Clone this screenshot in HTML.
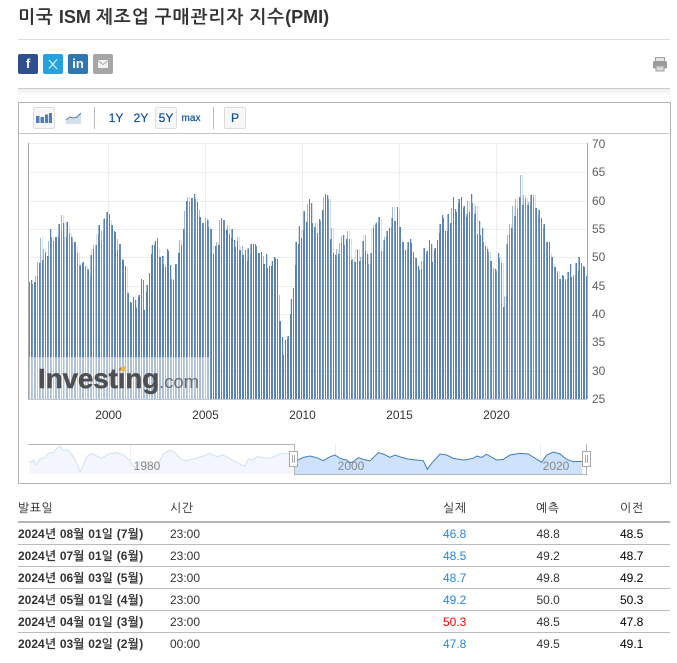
<!DOCTYPE html>
<html lang="ko"><head><meta charset="utf-8"><title>미국 ISM 제조업 구매관리자 지수(PMI)</title>
<style>
html,body{margin:0;padding:0;background:#fff}
body{width:677px;height:663px;overflow:hidden;position:relative;font-family:"Liberation Sans","NanumGothic","Noto Sans CJK KR",sans-serif;font-size:12px;color:#333}
.a{position:absolute;white-space:nowrap}
.h{left:18px;width:652px;height:1px;background:#bbb}
.r{line-height:22px;height:22px}
.btn{position:absolute;top:107px;height:20px;background:#f7f7f7;border:1px solid #ddd;border-radius:2px}
.t{position:absolute;top:107px;line-height:22px;color:#0f4f96;font-size:12px;text-align:center;-webkit-text-stroke:.2px #0f4f96}
.s{position:absolute;top:54px;width:20px;height:20px;border-radius:2px;color:#fff;text-align:center;line-height:20px;font-weight:bold;font-size:13px}
.sep{position:absolute;top:107px;width:1px;height:22px;background:#bbb}
svg text{font-family:"Liberation Sans",sans-serif;font-size:12px}
i{font-style:normal;letter-spacing:.5px}
.ti i{letter-spacing:1px}
</style></head><body>
<div class="a ti" style="left:18px;top:5px;font-size:18px;font-weight:bold;line-height:24px;color:#333"><i>미국</i> ISM <i>제조업</i> <i>구매관리자</i> <i>지수</i>(PMI)</div>
<div class="a" style="left:18px;top:39px;width:652px;height:1px;background:#ddd"></div>
<div class="s" style="left:18px;background:#2f4f8f">f</div>
<div class="s" style="left:43px;background:#24a3e0"><svg width="20" height="20" style="display:block"><path d="M6 6l8 9M14 5.500l-8 9" stroke="#dff2fb" stroke-width="1.200" fill="none"/></svg></div>
<div class="s" style="left:68px;background:#2f77b0">in</div>
<div class="s" style="left:93px;background:#a6a6a6"><svg width="20" height="20" style="display:block"><rect x="5" y="6" width="10" height="8" rx="1" fill="#f2f2f2"/><path d="M5.500 7l4.500 3.500L14.500 7" stroke="#a6a6a6" fill="none"/></svg></div>
<svg class="a" style="left:652px;top:56px" width="16" height="16"><rect x="3.500" y="1.500" width="9" height="4" fill="#e4e4e4" stroke="#a0a0a0"/><rect x="1" y="5" width="14" height="7.500" rx="1.500" fill="#9a9a9a"/><rect x="4" y="10" width="8" height="5" fill="#d8d8d8" stroke="#a0a0a0"/></svg>
<div class="a" style="left:18px;top:88px;width:652px;height:1px;background:#ccc"></div>
<div class="a" style="left:18px;top:89px;width:652px;height:7px;background:linear-gradient(#eee,#fff)"></div>

<div class="a" style="left:18px;top:102px;width:651px;height:380px;border:1px solid #b3b3b3"></div>
<div class="a" style="left:19px;top:133px;width:650px;height:1px;background:#c4c4c4"></div>
<div class="btn" style="left:33px;width:20px"><svg width="20" height="20" style="display:block"><path d="M2 8h3.500v7H2zM6.500 9h3.500v6H6.500zM11 6.500h3.200V15H11zM15 5h3v10h-3z" fill="#4f7fb8"/></svg></div>
<svg class="a" style="left:65px;top:110px" width="17" height="16"><path d="M1 10L5 7l3 1 4-1 4-4v11H1z" fill="#d5e0ee"/><path d="M1 10L5 7l3 1 4-1 4-4" stroke="#4f7fb8" fill="none"/></svg>
<div class="sep" style="left:94px"></div>
<div class="t" style="left:105px;width:22px">1Y</div>
<div class="t" style="left:130px;width:22px">2Y</div>
<div class="btn" style="left:155px;width:20px"></div>
<div class="t" style="left:155px;width:22px">5Y</div>
<div class="t" style="left:180px;top:108px;width:22px;font-size:10px">max</div>
<div class="sep" style="left:213px"></div>
<div class="btn" style="left:224px;width:20px"></div>
<div class="t" style="left:224px;width:22px">P</div>

<svg class="a" style="left:0;top:0" width="677" height="490">
<defs>
<pattern id="stripe" x="29" y="0" width="8" height="20" patternUnits="userSpaceOnUse"><path d="M0 0h1v20H0zM2 0h1v20H2zM3 0h1v20H3zM5 0h1v20H5zM6 0h1v20H6z" fill="#fff"/></pattern>
<mask id="bm" maskUnits="userSpaceOnUse" x="0" y="0" width="677" height="490"><rect x="28" y="140" width="560" height="260" fill="url(#stripe)"/></mask>
</defs>
<path d="M28 143.500H587M28 172.500H587M28 201.500H587M28 229.500H587M28 257.500H587M28 286.500H587M28 314.500H587M28 342.500H587M28 371.500H587M108.500 143V399M205.500 143V399M302.500 143V399M399.500 143V399M496.500 143V399" stroke="#eee" fill="none"/>
<g mask="url(#bm)">
<g transform="translate(20,140) scale(.33333)" stroke="#5983b2" stroke-width="5.500" fill="none">
<path d="M27 425V777M34 420V777M40 432V777M44 426V777M49 408V777M55 366V777M58 369V777M64 294V777M67 360V777M73 327V777M77 337V777M82 348V777M88 303V777M91 267V777M97 291V777M103 303V777M108 291V777M113 291V777M118 252V777M121 273V777M127 225V777M130 249V777M137 291V777M142 246V777M145 258V777M151 279V777M155 291V777M161 306V777M165 306V777M169 318V777M175 339V777M181 376V777M185 370V777M190 366V777M193 378V777M199 378V777M205 388V777M208 408V777M214 345V777M218 327V777M223 315V777M230 315V777M233 282V777M238 255V777M241 300V777M247 273V777M253 237V777M256 234V777M262 216V777M268 222V777M271 240V777M277 255V777M282 273V777M286 276V777M290 297V777M295 330V777M300 312V777M306 358V777M310 360V777M316 378V777M319 381V777M325 459V777M331 486V777M335 489V777M340 471V777M346 480V777M349 503V777M355 471V777M358 465V777M364 417V777M369 420V777M373 510V777M379 456V777M382 435V777M388 399V777M394 342V777M398 315V777M403 315V777M407 303V777M411 294V777M415 327V777M419 351V777M424 351V777M428 348V777M433 372V777M436 381V777M442 327V777M447 333V777M451 375V777M457 417V777M460 420V777M466 372V777M472 372V777M476 339V777M481 300V777M484 315V777M490 267V777M496 213V777M499 183V777M505 171V777M511 186V777M514 174V777M520 174V777M523 162V777M529 177V777M532 186V777M536 210V777M541 231V777M547 249V777M553 249V777M559 234V777M563 240V777M568 261V777M574 267V777M577 318V777M581 342V777M586 318V777M592 306V777M597 315V777M601 240V777M606 234V777M612 240V777M616 267V777M621 270V777M625 255V777M630 282V777M634 294V777M637 267V777M643 300V777M647 321V777M651 303V777M655 291V777M660 330V777M665 318V777M670 345V777M675 330V777M680 363V777M685 325V777M688 342V777M694 312V777M700 312V777M705 312V777M708 318V777M713 339V777M718 339V777M724 336V777M728 348V777M733 372V777M739 342V777M743 384V777M748 378V777M753 378V777M758 363V777M763 351V777M768 354V777M773 357V777M776 465V777M781 543V777M787 591V777M791 645V777M796 600V777M801 597V777M805 588V777M811 522V777M815 477V777M820 444V777M826 375V777M829 306V777M835 312V777"/>
</g>
<g transform="translate(300,140) scale(.33333)" stroke="#5983b2" stroke-width="5.500" fill="none">
<path d="M-1 258V777M3 294V777M8 270V777M13 213V777M19 246V777M25 192V777M28 177V777M34 189V777M37 249V777M43 261V777M49 249V777M52 279V777M58 237V777M64 243V777M67 210V777M73 171V777M76 162V777M82 165V777M88 177V777M91 297V777M97 264V777M100 339V777M106 345V777M112 327V777M115 342V777M121 309V777M127 288V777M130 285V777M136 315V777M139 297V777M145 273V777M151 297V777M154 360V777M160 357V777M166 366V777M170 330V777M175 327V777M178 363V777M184 351V777M190 303V777M194 285V777M199 333V777M202 342V777M208 372V777M214 339V777M218 264V777M223 255V777M229 250V777M232 246V777M238 231V777M241 237V777M247 333V777M253 300V777M256 291V777M262 273V777M268 264V777M271 264V777M277 234V777M280 201V777M286 243V777M292 201V777M295 207V777M301 261V777M304 297V777M310 306V777M316 330V777M319 330V777M325 306V777M331 297V777M334 309V777M340 336V777M343 351V777M349 354V777M355 378V777M358 390V777M364 387V777M367 363V777M373 324V777M379 342V777M382 333V777M388 300V777M394 312V777M397 366V777M403 330V777M406 324V777M412 300V777M418 279V777M421 252V777M427 225V777M430 234V777M436 273V777M442 273V777M445 222V777M451 249V777M457 204V777M460 171V777M466 207V777M469 216V777M475 189V777M478 177V777M484 171V777M490 204V777M493 198V777M499 231V777M502 222V777M505 183V777M508 216V777M514 162V777M520 189V777M526 222V777M529 198V777M532 282V777M538 243V777M541 285V777M547 264V777M553 306V777M559 318V777M562 327V777M568 336V777M574 363V777M577 393V777M583 384V777M586 387V777M592 393V777M595 339V777M601 354V777M607 369V777M610 501V777M616 471V777M622 312V777M625 285V777M631 252V777M634 264V777M640 198V777M646 228V777M649 177V777M655 207V777M658 171V777M664 105V777M667 195V777M673 165V777M679 174V777M685 195V777M688 186V777M694 165V777M697 171V777M703 165V777M709 204V777M712 225V777M718 210V777M724 234V777M727 264V777M733 252V777M736 303V777M742 306V777M748 306V777M751 339V777M757 351V777M760 372V777M766 381V777M772 399V777M775 393V777M781 417V777M787 405V777M790 408V777M796 423V777M799 417V777M805 396V777M811 372V777M814 411V777M820 411V777M823 405V777M829 369V777M835 393V777M838 351V777M844 369V777M850 378V777M853 381V777M859 408V777"/>
</g>
</g>
<rect x="28" y="357" width="182" height="42" fill="#fff" fill-opacity=".5"/>
<text x="38" y="388" style="font-size:28px;font-weight:bold;letter-spacing:-.2px" fill="#4d4f53" stroke="#4d4f53" stroke-width=".4">Investing</text>
<text x="159" y="388" style="font-size:18.500px" fill="#6a6c70">.com</text>
<path d="M120 371l1-4 5-1-1 5z" fill="#f5b240"/>
<path d="M28.500 143V399M587.500 143V399" stroke="#a8a8a8" fill="none"/>
<path d="M28 399.500H587" stroke="#bcc8d8" fill="none"/>
<g fill="#606060" text-anchor="start">
<text x="592" y="148">70</text><text x="592" y="176">65</text><text x="592" y="205">60</text><text x="592" y="233">55</text><text x="592" y="261">50</text><text x="592" y="290">45</text><text x="592" y="318">40</text><text x="592" y="346">35</text><text x="592" y="375">30</text><text x="592" y="403">25</text>
</g>
<g fill="#333" text-anchor="middle">
<text x="108.500" y="419">2000</text><text x="205.500" y="419">2005</text><text x="302.500" y="419">2010</text><text x="399.500" y="419">2015</text><text x="496.500" y="419">2020</text>
</g>
<path d="M130.500 444V474M335.500 444V474M540.500 444V474" stroke="#eee" fill="none"/>
<g transform="translate(10,430) scale(.33333)">
<path d="M57 132V92L65 95 72 90 78 105 90 88 105 82 115 70 130 68 140 55 150 48 160 62 175 60 190 80 200 100 210 125 218 110 230 80 245 70 260 78 275 85 295 72 320 68 340 75 360 92 375 115 390 95 410 95 430 110 445 100 460 72 480 60 495 68 510 85 530 92 555 85 580 78 600 70 620 80 640 75 670 92 695 105 705 108 715 88 730 90 740 80 760 82 780 85 810 72 830 70 850 78V132Z" fill="#f3f7fd"/>
<path d="M57 92L65 95 72 90 78 105 90 88 105 82 115 70 130 68 140 55 150 48 160 62 175 60 190 80 200 100 210 125 218 110 230 80 245 70 260 78 275 85 295 72 320 68 340 75 360 92 375 115 390 95 410 95 430 110 445 100 460 72 480 60 495 68 510 85 530 92 555 85 580 78 600 70 620 80 640 75 670 92 695 105 705 108 715 88 730 90 740 80 760 82 780 85 810 72 830 70 850 78" fill="none" stroke="#d2e1f0" stroke-width="3"/>
<path d="M852 132V85L865 90 880 82 900 78 920 83 940 92 960 80 975 75 990 85 1000 88 1010 90 1020 98 1030 95 1045 83 1060 88 1080 93 1105 68 1120 72 1140 82 1155 75 1175 82 1200 88 1240 92 1252 118 1265 100 1290 72 1310 75 1330 85 1360 90 1390 85 1400 78 1415 82 1430 73 1460 90 1480 88 1500 75 1530 70 1555 72 1580 88 1595 97 1610 75 1630 66 1650 72 1670 88 1690 95 1717 94V132Z" fill="#cfe2fb"/>
<path d="M852 85L865 90 880 82 900 78 920 83 940 92 960 80 975 75 990 85 1000 88 1010 90 1020 98 1030 95 1045 83 1060 88 1080 93 1105 68 1120 72 1140 82 1155 75 1175 82 1200 88 1240 92 1252 118 1265 100 1290 72 1310 75 1330 85 1360 90 1390 85 1400 78 1415 82 1430 73 1460 90 1480 88 1500 75 1530 70 1555 72 1580 88 1595 97 1610 75 1630 66 1650 72 1670 88 1690 95 1717 94" fill="none" stroke="#3f7fbf" stroke-width="3"/>
</g>
<path d="M28 444.500H294.500V474.500H586.500V444" stroke="#b3b3b3" fill="none"/>
<g fill="#888" text-anchor="middle"><text x="147" y="470">1980</text><text x="351" y="470">2000</text><text x="556" y="470">2020</text></g>
<g fill="#fff" stroke="#aaa"><rect x="289.500" y="451.500" width="8" height="15"/><rect x="582.500" y="451.500" width="8" height="15"/></g>
<path d="M292.500 455V463M294.500 455V463M585.500 455V463M587.500 455V463" stroke="#aaa" fill="none"/>
</svg>

<div class="a" style="left:18px;top:498px;line-height:20px;color:#222"><i>발표일</i></div>
<div class="a" style="left:170px;top:498px;line-height:20px;color:#222"><i>시간</i></div>
<div class="a" style="left:443px;top:498px;line-height:20px;color:#222"><i>실제</i></div>
<div class="a" style="left:536px;top:498px;line-height:20px;color:#222"><i>예측</i></div>
<div class="a" style="left:620px;top:498px;line-height:20px;color:#222"><i>이전</i></div>
<div class="a" style="left:18px;top:521px;width:652px;height:2px;background:#b5b5b5"></div>
<div class="a h" style="top:544px"></div><div class="a h" style="top:566px"></div><div class="a h" style="top:588px"></div><div class="a h" style="top:610px"></div><div class="a h" style="top:632px"></div>

<div class="a r" style="left:18px;top:523px;font-weight:bold">2024<i>년</i> 08<i>월</i> 01<i>일</i> (7<i>월</i>)</div><div class="a r" style="left:170px;top:523px">23:00</div><div class="a r" style="left:443px;top:523px;color:#2a86d9">46.8</div><div class="a r" style="left:536.500px;top:523px">48.8</div><div class="a r" style="left:620px;top:523px;color:#000">48.5</div>
<div class="a r" style="left:18px;top:545px;font-weight:bold">2024<i>년</i> 07<i>월</i> 01<i>일</i> (6<i>월</i>)</div><div class="a r" style="left:170px;top:545px">23:00</div><div class="a r" style="left:443px;top:545px;color:#2a86d9">48.5</div><div class="a r" style="left:536.500px;top:545px">49.2</div><div class="a r" style="left:620px;top:545px;color:#000">48.7</div>
<div class="a r" style="left:18px;top:567px;font-weight:bold">2024<i>년</i> 06<i>월</i> 03<i>일</i> (5<i>월</i>)</div><div class="a r" style="left:170px;top:567px">23:00</div><div class="a r" style="left:443px;top:567px;color:#2a86d9">48.7</div><div class="a r" style="left:536.500px;top:567px">49.8</div><div class="a r" style="left:620px;top:567px;color:#000">49.2</div>
<div class="a r" style="left:18px;top:589px;font-weight:bold">2024<i>년</i> 05<i>월</i> 01<i>일</i> (4<i>월</i>)</div><div class="a r" style="left:170px;top:589px">23:00</div><div class="a r" style="left:443px;top:589px;color:#2a86d9">49.2</div><div class="a r" style="left:536.500px;top:589px">50.0</div><div class="a r" style="left:620px;top:589px;color:#000">50.3</div>
<div class="a r" style="left:18px;top:611px;font-weight:bold">2024<i>년</i> 04<i>월</i> 01<i>일</i> (3<i>월</i>)</div><div class="a r" style="left:170px;top:611px">23:00</div><div class="a r" style="left:443px;top:611px;color:#f00">50.3</div><div class="a r" style="left:536.500px;top:611px">48.5</div><div class="a r" style="left:620px;top:611px;color:#000">47.8</div>
<div class="a r" style="left:18px;top:633px;font-weight:bold">2024<i>년</i> 03<i>월</i> 02<i>일</i> (2<i>월</i>)</div><div class="a r" style="left:170px;top:633px">00:00</div><div class="a r" style="left:443px;top:633px;color:#2a86d9">47.8</div><div class="a r" style="left:536.500px;top:633px">49.5</div><div class="a r" style="left:620px;top:633px;color:#000">49.1</div>
</body></html>
